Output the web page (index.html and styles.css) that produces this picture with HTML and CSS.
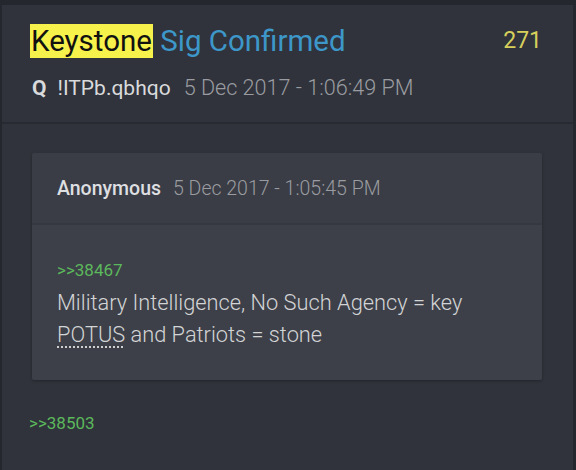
FILE: index.html
```html
<!DOCTYPE html>
<html>
<head>
<meta charset="utf-8">
<link rel="stylesheet" href="styles.css">
</head>
<body>
<div class="card">
  <div class="head">
    <div class="title-row">
      <div class="title"><span class="hl">Keystone</span> Sig Confirmed</div>
      <div class="num">271</div>
    </div>
    <div class="meta"><span class="name">Q</span><span class="trip">!ITPb.qbhqo</span><span class="date mdate">5 Dec 2017 - 1:06:49 PM</span></div>
  </div>
  <div class="body">
    <div class="quote">
      <div class="q-head"><span class="anon">Anonymous</span><span class="date qdate">5 Dec 2017 - 1:05:45 PM</span></div>
      <div class="q-body">
        <div class="ref">&gt;&gt;38467</div>
        <div class="text">Military Intelligence, No Such Agency = key<br><span class="abbr">POTUS</span> and Patriots = stone</div>
      </div>
    </div>
    <div class="ref ref2">&gt;&gt;38503</div>
  </div>
</div>
</body>
</html>
```
FILE: styles.css
```css
html, body {
  margin: 0;
  padding: 0;
  background: #25272e;
  font-family: Roboto, "Liberation Sans", sans-serif;
  overflow: hidden;
}
.card {
  margin: 5px 3px 0 2px;
  background: #30333b;
  height: 470px;
}
.head {
  box-sizing: border-box;
  height: 119px;
  padding: 19px 31px 0 28px;
  border-bottom: 2px solid #282a31;
}
.title-row {
  display: flex;
  justify-content: space-between;
  align-items: flex-start;
}
.title {
  font-size: 29.5px;
  line-height: 35px;
  color: #3d97c9;
}
.hl {
  background: #f7f24b;
  color: #111;
  padding: 0 1px;
}
.num {
  font-size: 23px;
  line-height: 28px;
  color: #d6cf5c;
  padding-top: 3px;
}
.meta {
  margin-top: 16px;
  padding-left: 2px;
  font-size: 21px;
  line-height: 26px;
  display: flex;
  align-items: baseline;
  gap: 11px;
}
.name {
  font-weight: 700;
  color: #d9dadc;
}
.trip {
  color: #d9dadc;
}
.date {
  color: #9a9ca1;
  font-weight: 300;
}
.mdate {
  font-size: 21.6px;
  margin-left: 2px;
}
.body {
  padding: 29px 31px 0 30px;
}
.quote {
  box-shadow: 0 1px 3px rgba(0,0,0,0.3);
  border-radius: 2px;
  overflow: hidden;
}
.q-head {
  box-sizing: border-box;
  background: #3a3d45;
  height: 72px;
  padding: 0 25px;
  display: flex;
  align-items: center;
  gap: 12px;
  font-size: 19.5px;
  border-bottom: 2px solid #353840;
}
.anon {
  font-weight: 500;
  color: #dedfe1;
}
.q-body {
  background: #3d4048;
  padding: 35px 25px 29px;
}
.ref {
  font-size: 17px;
  color: #5cb85c;
  line-height: 21px;
}
.text {
  margin-top: 6px;
  font-size: 21.8px;
  line-height: 32px;
  color: #d3d4d6;
  font-weight: 300;
}
.abbr {
  text-decoration: underline dotted #cfcfcf;
  text-underline-offset: 4px;
  text-decoration-thickness: 2px;
}
.ref2 {
  margin-top: 33px;
  margin-left: -3px;
}
```
